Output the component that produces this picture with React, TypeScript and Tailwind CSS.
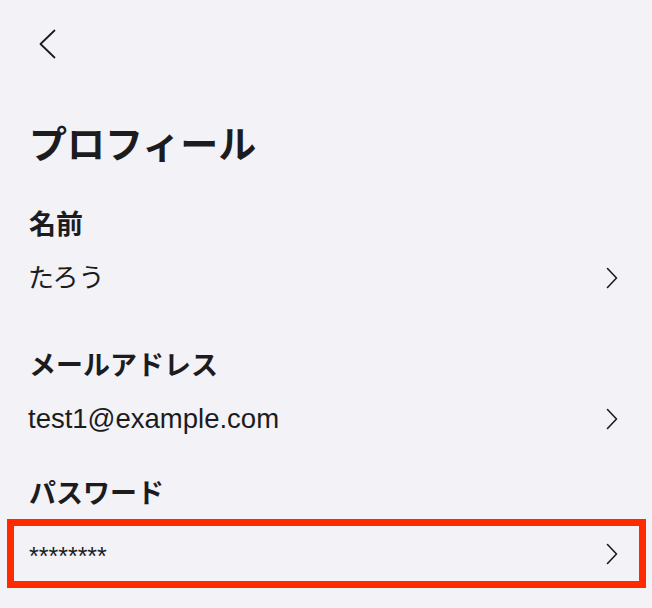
import React from "react";

const font = {
  fontFamily: '"Liberation Sans", "Noto Sans CJK JP", sans-serif',
};

function ChevronRight() {
  return (
    <svg width="12" height="22" viewBox="0 0 12 22" fill="none" className="shrink-0">
      <polyline
        points="1.5,1.5 10.5,11 1.5,20.5"
        stroke="#1c1c1e"
        strokeWidth="1.6"
        strokeLinecap="round"
        strokeLinejoin="round"
      />
    </svg>
  );
}

function ChevronLeft() {
  return (
    <svg width="17" height="30" viewBox="0 0 17 30" fill="none">
      <polyline
        points="15.5,1.5 1.5,15 15.5,28.5"
        stroke="#1c1c1e"
        strokeWidth="1.8"
        strokeLinecap="round"
        strokeLinejoin="round"
      />
    </svg>
  );
}

function Label({ text, className }: { text: string; className: string }) {
  return (
    <div className={`h-10 flex items-center pl-[29px] text-[27px] font-bold ${className}`}>
      {text}
    </div>
  );
}

function ValueRow({
  text,
  className,
  textClass,
}: {
  text: string;
  className: string;
  textClass: string;
}) {
  return (
    <div className={`h-10 flex items-center justify-between pl-[28px] pr-[34px] ${className}`}>
      <span className={textClass}>{text}</span>
      <ChevronRight />
    </div>
  );
}

export default function App() {
  return (
    <div
      className="w-[652px] h-[608px] bg-[#f2f2f7] text-[#1c1c1e] flex flex-col overflow-hidden"
      style={font}
    >
      {/* Back */}
      <div className="h-[88px] flex items-center pl-[39px]">
        <ChevronLeft />
      </div>

      {/* Title */}
      <h1 className="mt-8 h-[50px] flex items-center pl-[29px] text-[38px] font-bold">
        プロフィール
      </h1>

      <Label text="名前" className="mt-[35px]" />
      <ValueRow text="たろう" className="mt-[13px]" textClass="text-[26px]" />

      <Label text="メールアドレス" className="mt-[48px]" />
      <ValueRow text="test1@example.com" className="mt-[13px]" textClass="text-[27.5px]" />

      <Label text="パスワード" className="mt-[35px]" />

      {/* Password row, highlighted */}
      <div className="mt-[5px] ml-[7px] w-[639px] h-[69px] border-[7px] border-[#ff2a00] flex items-center justify-between pl-[15px] pr-[21px]">
        <span className="text-[25px] leading-none pt-[6px]">********</span>
        <ChevronRight />
      </div>
    </div>
  );
}
